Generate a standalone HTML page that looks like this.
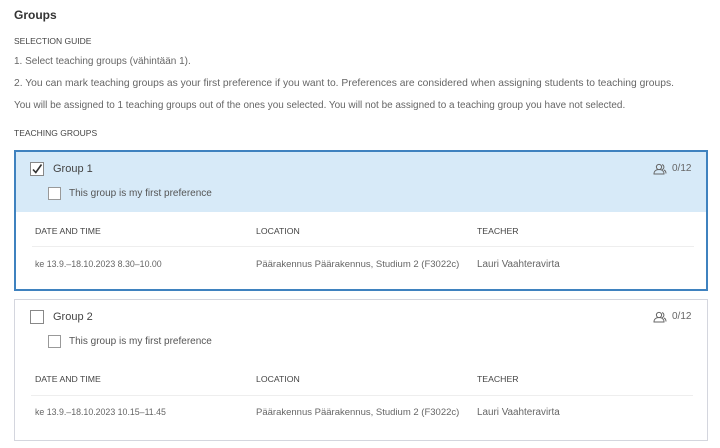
<!DOCTYPE html>
<html><head><meta charset="utf-8"><style>
*{margin:0;padding:0;box-sizing:border-box}
body{width:720px;height:448px;background:#fff;font-family:"Liberation Sans",sans-serif;color:#555;position:relative;overflow:hidden}
.a{position:absolute;white-space:nowrap;line-height:1}
.h{font-size:12px;font-weight:bold;color:#333}
.s{font-size:8.5px;color:#444}
.t{color:#666}
.card{position:absolute;left:14px;width:694px}
.c1{top:150px;height:141px;border:2px solid #3f82bf}
.c2{top:299px;height:142px;border:1px solid #d4d6de}
.hd{position:absolute;left:0;right:0;top:0;height:60px;background:#d7eaf8}
.cb{position:absolute;width:14px;height:14px;border:1px solid #888;background:#fff}
.cb2{position:absolute;width:13px;height:13px;border:1px solid #999;background:#fff}
.g{font-size:11px;color:#444}
.p{font-size:10px;color:#555}
.th{font-size:8.7px;color:#444}
.td{color:#666}
.sep{position:absolute;left:16px;width:662px;height:1px;background:#eee}
.cnt{font-size:10px;color:#666}
</style></head><body>
<div class="a h" style="left:14px;top:9px">Groups</div>
<div class="a s" style="left:14px;top:37px">SELECTION GUIDE</div>
<div class="a t" style="left:14px;top:57px;font-size:10px">1. Select teaching groups (vähintään 1).</div>
<div class="a t" style="left:14px;top:79px;font-size:10.3px">2. You can mark teaching groups as your first preference if you want to. Preferences are considered when assigning students to teaching groups.</div>
<div class="a t" style="left:14px;top:101px;font-size:9.95px">You will be assigned to 1 teaching groups out of the ones you selected. You will not be assigned to a teaching group you have not selected.</div>
<div class="a s" style="left:14px;top:129px">TEACHING GROUPS</div>

<div class="card c1">
<div class="hd"></div>
<div class="cb" style="left:14px;top:10px"><svg width="12" height="12" viewBox="0 0 12 12" style="position:absolute;left:0;top:0"><path d="M2 6.5L4.8 9.5L10.5 1.5" fill="none" stroke="#333" stroke-width="1.6"/></svg></div>
<div class="a g" style="left:37px;top:12px">Group 1</div>
<div class="cb2" style="left:32px;top:35px"></div>
<div class="a p" style="left:53px;top:37px">This group is my first preference</div>
<svg class="a" style="left:637px;top:11px" width="14" height="12" viewBox="0 0 14 12"><g fill="none" stroke="#666" stroke-width="1"><circle cx="6" cy="4" r="2.6"/><path d="M1 11c0-3 2.2-4.5 5-4.5s5 1.5 5 4.5z"/><path d="M9 1.6a2.6 2.6 0 0 1 0 5M11 7c1.3.6 2 1.8 2 3.5"/></g></svg>
<div class="a cnt" style="left:656px;top:12px">0/12</div>
<div class="a th" style="left:19px;top:75px">DATE AND TIME</div>
<div class="a th" style="left:240px;top:75px">LOCATION</div>
<div class="a th" style="left:461px;top:75px">TEACHER</div>
<div class="sep" style="top:94px"></div>
<div class="a td" style="left:19px;top:108px;font-size:8.8px">ke 13.9.–18.10.2023 8.30–10.00</div>
<div class="a td" style="left:240px;top:108px;font-size:9.5px">Päärakennus Päärakennus, Studium 2 (F3022c)</div>
<div class="a td" style="left:461px;top:108px;font-size:9.9px">Lauri Vaahteravirta</div>
</div>

<div class="card c2">
<div class="cb" style="left:15px;top:10px"></div>
<div class="a g" style="left:38px;top:12px">Group 2</div>
<div class="cb2" style="left:33px;top:35px"></div>
<div class="a p" style="left:54px;top:37px">This group is my first preference</div>
<svg class="a" style="left:638px;top:11px" width="14" height="12" viewBox="0 0 14 12"><g fill="none" stroke="#666" stroke-width="1"><circle cx="6" cy="4" r="2.6"/><path d="M1 11c0-3 2.2-4.5 5-4.5s5 1.5 5 4.5z"/><path d="M9 1.6a2.6 2.6 0 0 1 0 5M11 7c1.3.6 2 1.8 2 3.5"/></g></svg>
<div class="a cnt" style="left:657px;top:12px">0/12</div>
<div class="a th" style="left:20px;top:75px">DATE AND TIME</div>
<div class="a th" style="left:241px;top:75px">LOCATION</div>
<div class="a th" style="left:462px;top:75px">TEACHER</div>
<div class="sep" style="top:95px"></div>
<div class="a td" style="left:20px;top:108px;font-size:8.8px">ke 13.9.–18.10.2023 10.15–11.45</div>
<div class="a td" style="left:241px;top:108px;font-size:9.5px">Päärakennus Päärakennus, Studium 2 (F3022c)</div>
<div class="a td" style="left:462px;top:108px;font-size:9.9px">Lauri Vaahteravirta</div>
</div>
</body></html>
